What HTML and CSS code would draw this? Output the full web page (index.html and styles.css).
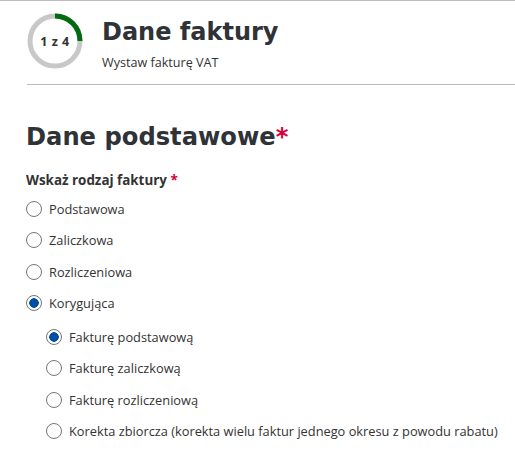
FILE: index.html
```html
<!DOCTYPE html>
<html lang="pl">
<head>
<meta charset="utf-8">
<link rel="stylesheet" href="styles.css">
</head>
<body>
<div class="page">
  <header class="header">
    <div class="ring">
      <svg width="56" height="56" viewBox="0 0 56 56">
        <circle cx="28" cy="28" r="25" fill="none" stroke="#c8c8c8" stroke-width="5"/>
        <path d="M28 3 A25 25 0 0 1 53 28" fill="none" stroke="#006b0f" stroke-width="5"/>
      </svg>
      <span class="ring-text">1 z 4</span>
    </div>
    <div class="titles">
      <h1 class="title">Dane faktury</h1>
      <p class="subtitle">Wystaw fakturę VAT</p>
    </div>
  </header>
  <main class="content">
    <h2 class="section">Dane podstawowe<span class="req">*</span></h2>
    <p class="label">Wskaż rodzaj faktury <span class="req">*</span></p>
    <ul class="options">
      <li class="opt"><span class="radio"></span>Podstawowa</li>
      <li class="opt"><span class="radio"></span>Zaliczkowa</li>
      <li class="opt"><span class="radio"></span>Rozliczeniowa</li>
      <li class="opt"><span class="radio checked"></span>Korygująca</li>
    </ul>
    <ul class="options sub">
      <li class="opt"><span class="radio checked"></span>Fakturę podstawową</li>
      <li class="opt"><span class="radio"></span>Fakturę zaliczkową</li>
      <li class="opt"><span class="radio"></span>Fakturę rozliczeniową</li>
      <li class="opt"><span class="radio"></span>Korekta zbiorcza (korekta wielu faktur jednego okresu z powodu rabatu)</li>
    </ul>
  </main>
</div>
</body>
</html>
```
FILE: styles.css
```css
html, body {
  margin: 0;
  padding: 0;
  background: #fff;
}
body {
  font-family: "Open Sans", "DejaVu Sans", sans-serif;
  color: #333;
  width: 515px;
  height: 452px;
  overflow: hidden;
}
.page {
  border-top: 1px solid #bdbdbd;
}
.header {
  display: flex;
  align-items: flex-start;
  margin-left: 27px;
  padding-top: 12px;
  height: 71px;
  border-bottom: 1px solid #bdbdbd;
}
.ring {
  position: relative;
  width: 56px;
  height: 56px;
  flex: none;
}
.ring svg {
  display: block;
}
.ring-text {
  position: absolute;
  inset: 0;
  display: flex;
  align-items: center;
  justify-content: center;
  font-size: 12.5px;
  font-weight: 700;
  color: #333;
  letter-spacing: 0.5px;
}
.titles {
  margin-left: 19px;
}
.title {
  margin: 3px 0 0;
  font-family: "DejaVu Sans", sans-serif;
  font-weight: 700;
  font-size: 24px;
  line-height: 32px;
  color: #2f3337;
}
.subtitle {
  margin: 7px 0 0;
  font-size: 12.6px;
  line-height: 16px;
  color: #333;
}
.content {
  padding-left: 26px;
}
.section {
  margin: 36px 0 0;
  font-family: "DejaVu Sans", sans-serif;
  font-weight: 700;
  font-size: 24.2px;
  line-height: 32px;
  color: #2f3337;
}
.req {
  color: #d6003a;
}
.label {
  margin: 18px 0 0;
  font-size: 13.4px;
  font-weight: 700;
  line-height: 18px;
}
.options {
  list-style: none;
  margin: 0;
  padding: 0;
}
.opt {
  display: flex;
  align-items: center;
  height: 31.5px;
  font-size: 12.8px;
}
.options:first-of-type {
  margin-top: 4px;
}
.sub {
  padding-left: 20px;
  margin-top: 2px;
}
.radio {
  box-sizing: border-box;
  width: 16px;
  height: 16px;
  border: 1px solid #757575;
  border-radius: 50%;
  margin-right: 7px;
  flex: none;
  background: #fff;
}
.radio.checked {
  background: radial-gradient(circle, #004fa3 0 4.5px, #fff 5px);
}
```
